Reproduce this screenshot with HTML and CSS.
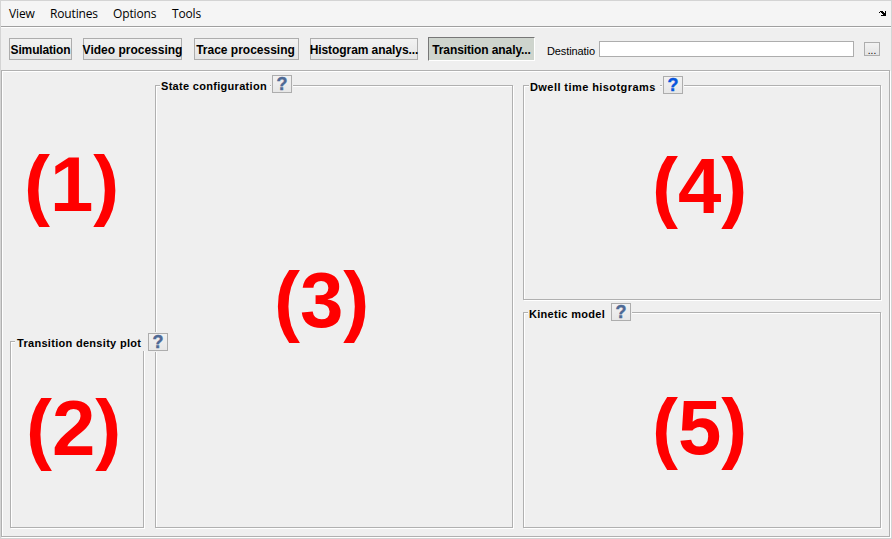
FILE: index.html
```html
<!DOCTYPE html>
<html lang="en">
<head>
<meta charset="utf-8">
<title>Transition analysis</title>
<link rel="stylesheet" href="styles.css">
</head>
<body>
<div class="window">
  <nav class="menu">
    <span class="m-view">View</span><span class="m-routines">Routines</span><span class="m-options">Options</span><span class="m-tools">Tools</span>
    <svg class="dock" width="7" height="5" viewBox="0 0 7 5" shape-rendering="crispEdges"><path d="M1 0h3v1h1v1h1V0h1v5H2V4h2V3H3V2H2V1H1zM0 1h1v1H0z"/></svg>
  </nav>
  <div class="toolbar">
    <button class="tab simulation"><span>Simulation</span></button>
    <button class="tab video"><span>Video processing</span></button>
    <button class="tab trace"><span>Trace processing</span></button>
    <button class="tab histogram"><span>Histogram analys...</span></button>
    <button class="tab active"><span>Transition analy...</span></button>
    <label class="dest">Destinatio</label>
    <div class="field"></div>
    <button class="browse">...</button>
  </div>
  <main class="panel">
    <div class="col left">
      <section class="area"><b class="num n1">(1)</b></section>
      <section class="group density"><h2><span>Transition density plot</span></h2><button class="help">?</button><b class="num n2">(2)</b></section>
    </div>
    <div class="col">
      <section class="group state"><h2><span>State configuration</span></h2><button class="help">?</button><b class="num n3">(3)</b></section>
    </div>
    <div class="col right">
      <section class="group dwell"><h2><span>Dwell time hisotgrams</span></h2><button class="help blue">?</button><b class="num n4">(4)</b></section>
      <section class="group kinetic"><h2><span>Kinetic model</span></h2><button class="help">?</button><b class="num n5">(5)</b></section>
    </div>
  </main>
</div>
</body>
</html>
```
FILE: styles.css
```css
* { box-sizing: border-box; }
body { margin: 0; font-family: "Liberation Sans", Arial, sans-serif; color: #000; }
button { font-family: inherit; padding: 0; margin: 0; color: #000; }
.window { width: 892px; height: 539px; border: 1px solid #d4d4d4; background: #efefef; display: flex; flex-direction: column; overflow: hidden; }

.menu { height: 26px; flex: none; background: #f5f5f5; border-bottom: 1px solid #a0a0a0; display: flex; align-items: center; padding: 0 5px 0 8px; font: 12px/24px "Open Sans", sans-serif; letter-spacing: -0.15px; white-space: nowrap; }
.m-view { width: 41px; }
.m-routines { width: 63px; }
.m-options { width: 59px; }
.dock { margin-left: auto; }

.toolbar { height: 43px; flex: none; border-top: 1px solid #fff; display: flex; align-items: flex-start; padding: 10px 11px 0 8px; }
.tab { height: 22px; flex: none; border: 1px solid #adadad; background: linear-gradient(#f2f2f2, #e4e4e4); font-size: 12px; font-weight: bold; line-height: 22px; display: flex; justify-content: center; white-space: nowrap; }
.simulation { width: 63px; margin-right: 11px; letter-spacing: -0.15px; }
.video { width: 99px; margin-right: 12px; }
.trace { width: 105px; margin-right: 11px; }
.trace span { margin-right: 2px; }
.histogram { width: 108px; margin-right: 10px; letter-spacing: -0.07px; }
.active { width: 107px; height: 24px; margin-top: -1px; border-color: #777 #fff #fff #777; background: #ced4cd; line-height: 24px; letter-spacing: -0.1px; }
.dest { width: 48px; margin: 7px 0 0 12px; font-size: 11px; line-height: 13px; letter-spacing: -0.1px; white-space: nowrap; }
.field { width: 255px; height: 16px; margin: 3px 10px 0 4px; flex: none; border: 1px solid #adadad; background: #fff; }
.browse { width: 16px; height: 14px; margin-top: 4px; flex: none; border: 1px solid #adadad; background: linear-gradient(#f2f2f2, #e4e4e4); font-size: 10px; line-height: 15px; }

.panel { width: 889px; height: 467px; border: 1px solid #b0b0b0; box-shadow: inset 1px 1px #fff, 1px 1px #fff; display: grid; grid-template-columns: 134px 358px 358px; column-gap: 11px; padding: 14px 8px 9px; }
.left { display: grid; grid-template-rows: 256px 187px; position: relative; z-index: 1; }
.right { display: grid; grid-template-rows: 215px 216px; row-gap: 12px; margin-left: -1px; width: 358px; }
.area, .group { position: relative; }
.group { border: 1px solid #b0b0b0; box-shadow: inset 1px 1px #fff, 1px 1px #fff; }
.state { height: 443px; }
h2 { position: absolute; left: 4px; top: -7px; margin: 0; height: 16px; padding: 0 4px 0 1px; background: #efefef; font-size: 11px; line-height: 16px; letter-spacing: 0.3px; white-space: nowrap; }
.state h2 { top: -8px; width: 110px; }
.dwell h2 { left: 5px; width: 131px; letter-spacing: 0.43px; }
.kinetic h2 { width: 82px; }
.density h2 { width: 131px; padding-left: 2px; }
.help { position: absolute; top: -10px; width: 20px; height: 18px; border: 1px solid #adadad; background: linear-gradient(#f2f2f2, #e7e7e7); font-size: 18px; line-height: 17px; font-weight: bold; color: #4e6995; -webkit-text-stroke: 0.4px currentColor; box-shadow: 0 0 0 1px #efefef; }
.blue { color: #0755dc; }
.density .help { left: 137px; top: -9px; }
.state .help { left: 116px; top: -11px; }
.dwell .help { left: 139px; }
.kinetic .help { left: 87px; }
.num { position: absolute; color: #f00; font-size: 78px; line-height: 80px; white-space: nowrap; }
.n1 { left: 14px; top: 59px; }
.n2 { left: 15px; top: 46px; }
.n3 { left: 118px; top: 174px; }
.n4 { left: 128px; top: 60px; }
.n5 { left: 128px; top: 74px; }
```
